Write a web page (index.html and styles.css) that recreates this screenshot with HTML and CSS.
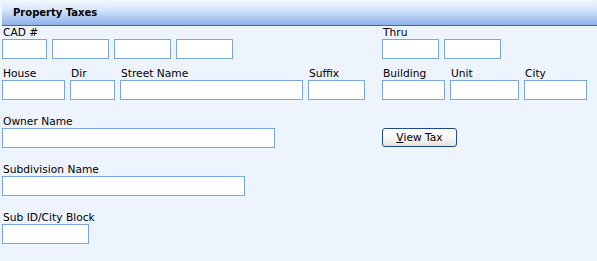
FILE: index.html
```html
<!DOCTYPE html>
<html lang="en">
<head>
    <meta charset="UTF-8">
    <title>Property Taxes</title>
    <link rel="stylesheet" href="styles.css">
</head>
<body>

<div class="panel">
    <div class="panel-head">Property Taxes</div>
    <form class="search-form">
        <div class="row row-first">
            <div class="col-left">
                <div class="field">
                    <label>CAD #</label>
                    <div class="inputs">
                        <input type="text" class="w45">
                        <input type="text" class="w57">
                        <input type="text" class="w57">
                        <input type="text" class="w57">
                    </div>
                </div>
            </div>
            <div class="col-right">
                <div class="field">
                    <label>Thru</label>
                    <div class="inputs">
                        <input type="text" class="w57">
                        <input type="text" class="w57">
                    </div>
                </div>
            </div>
        </div>

        <div class="row row-second">
            <div class="col-left">
                <div class="field"><label>House</label><input type="text" class="w63"></div>
                <div class="field"><label>Dir</label><input type="text" class="w45"></div>
                <div class="field"><label>Street Name</label><input type="text" class="w183"></div>
                <div class="field"><label>Suffix</label><input type="text" class="w57"></div>
            </div>
            <div class="col-right">
                <div class="field"><label>Building</label><input type="text" class="w63"></div>
                <div class="field"><label>Unit</label><input type="text" class="w69"></div>
                <div class="field"><label>City</label><input type="text" class="w63"></div>
            </div>
        </div>

        <div class="row">
            <div class="col-left">
                <div class="field"><label>Owner Name</label><input type="text" class="w273"></div>
            </div>
            <div class="col-right">
                <button type="submit" class="view-btn"><u>V</u>iew Tax</button>
            </div>
        </div>

        <div class="row">
            <div class="col-left">
                <div class="field"><label>Subdivision Name</label><input type="text" class="w243"></div>
            </div>
        </div>

        <div class="row">
            <div class="col-left">
                <div class="field"><label>Sub ID/City Block</label><input type="text" class="w87"></div>
            </div>
        </div>
    </form>
</div>

</body>
</html>
```

FILE: styles.css
```css
body { margin: 0; background: #eef4fd; font-family: "DejaVu Sans", Verdana, sans-serif; font-size: 10.67px; color: #000; }
.panel { height: 261px; }
.panel-head {
    margin-left: 2px;
    height: 25px;
    line-height: 26px;
    padding-left: 11px;
    font-size: 10px;
    font-weight: bold;
    border-top-left-radius: 6px;
    border-bottom: 1px solid #3d68bd;
    background: linear-gradient(#f0f7ff 0%, #dbe8fb 35%, #a9c6f1 75%, #8db2ea 100%);
}
.search-form { padding-left: 2px; }
.row { display: flex; margin-top: 15px; }
.row-first { margin-top: 0; }
.row-second { margin-top: 8px; }
.col-left { display: flex; gap: 5px; width: 380px; }
.col-right { display: flex; gap: 5px; }
.field { display: flex; flex-direction: column; }
label { display: block; height: 13px; line-height: 13px; padding-left: 1px; white-space: nowrap; }
.inputs { display: flex; gap: 5px; }
input {
    box-sizing: border-box;
    height: 20px;
    margin: 0;
    padding: 1px 2px;
    border: 1px solid #7aa6df;
    background: #fff;
    font: inherit;
}
.w45 { width: 45px; }
.w57 { width: 57px; }
.w63 { width: 63px; }
.w69 { width: 69px; }
.w87 { width: 87px; }
.w183 { width: 183px; }
.w243 { width: 243px; }
.w273 { width: 273px; }
.view-btn {
    box-sizing: border-box;
    margin-top: 13px;
    width: 75px;
    height: 19px;
    padding: 0;
    border: 1px solid #1c4a8c;
    border-radius: 3px;
    background: linear-gradient(#ffffff 0%, #f7f6f2 60%, #e4e2da 100%);
    font: inherit;
    color: #000;
    cursor: pointer;
}
```
